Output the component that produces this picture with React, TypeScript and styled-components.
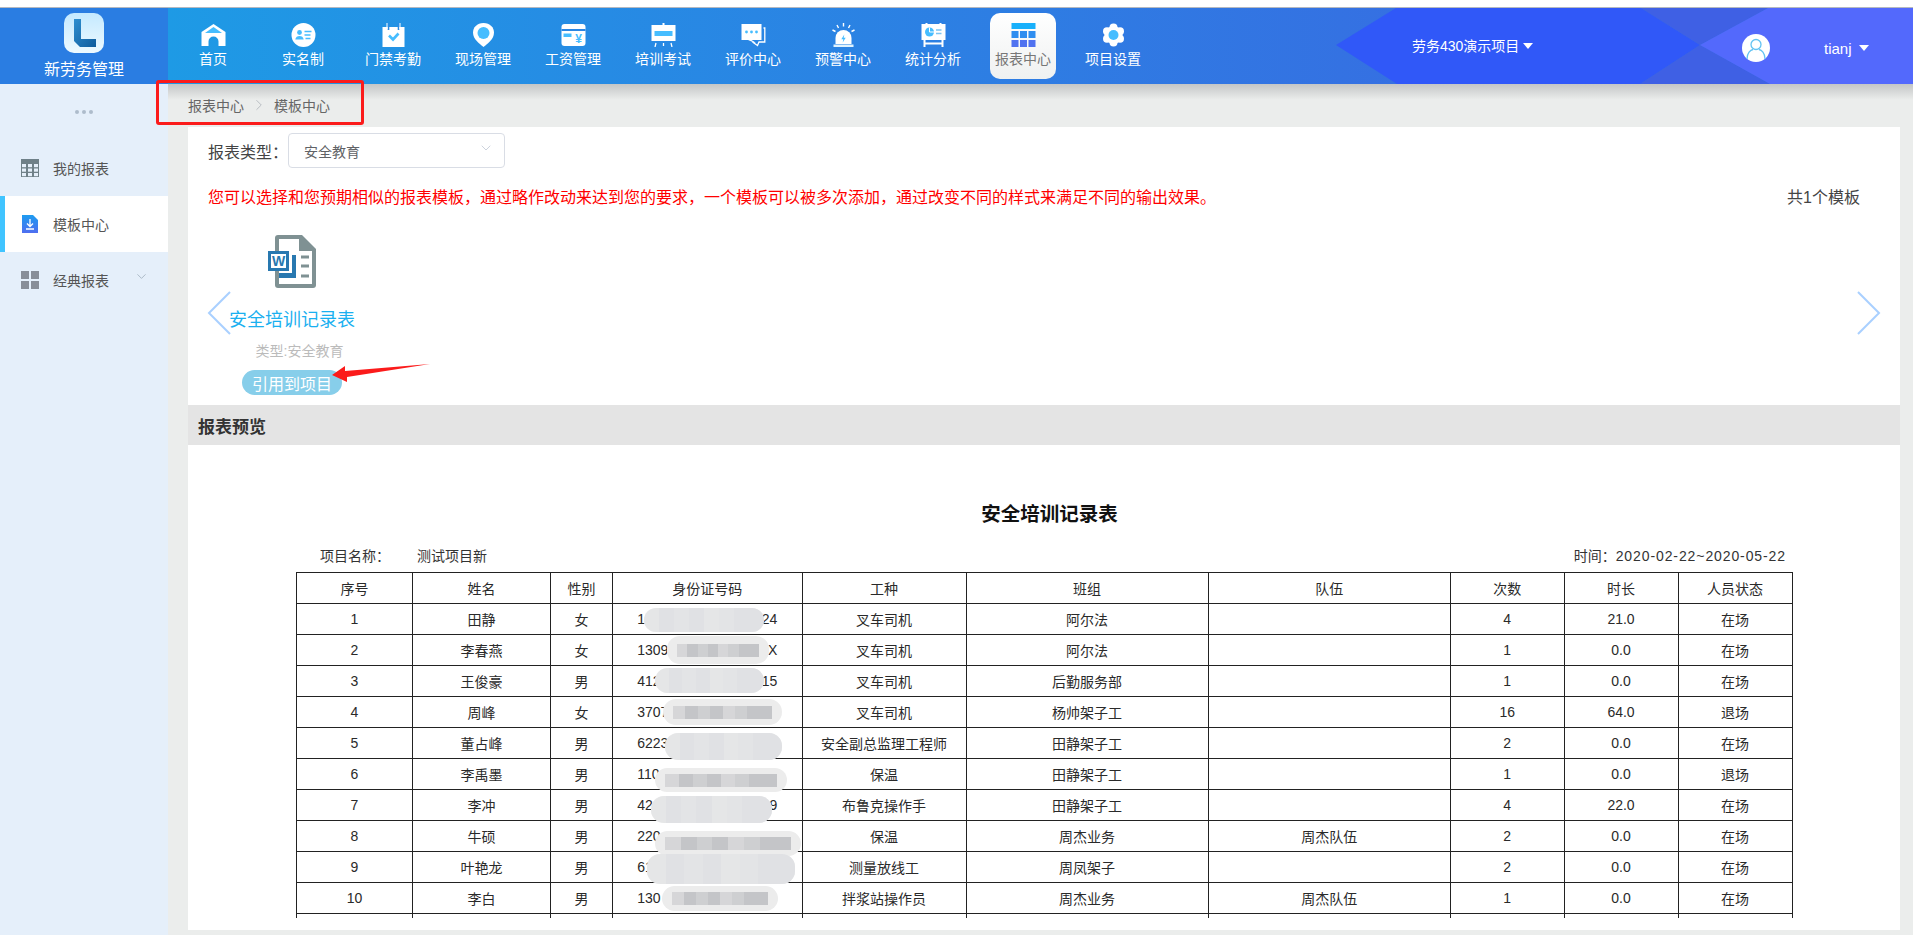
import React from "react";
import styled, { createGlobalStyle } from "styled-components";
import { ChevronDown, ChevronRight } from "lucide-react";

const fontStack = `"Liberation Sans", "Noto Sans CJK SC", sans-serif`;
const accent = "#46bdff";

const GlobalStyle = createGlobalStyle`
  html, body {
    margin: 0;
    height: 935px;
    overflow: hidden;
    background: #fff;
    font-family: ${fontStack};
  }
`;

const Page = styled.div`
  position: relative;
  height: 935px;
  padding-top: 8px;
  box-sizing: border-box;
  display: flex;
  flex-direction: column;
  overflow: hidden;
`;

const Header = styled.header`
  position: relative;
  flex: 0 0 76px;
  display: flex;
  background: linear-gradient(90deg, #1e9ae5 168px, #3570e2 1400px);
  box-shadow: 0 -1px 0 #b4b8c0;
  z-index: 2;
`;

const HeaderPattern = styled.svg`
  position: absolute;
  right: 0;
  top: 0;
  width: 577px;
  height: 76px;
`;

const Brand = styled.div`
  flex: 0 0 168px;
  background: #2a7de2;
  display: flex;
  flex-direction: column;
  align-items: center;
  padding-top: 5px;
  box-sizing: border-box;
  color: #fff;
  font-size: 16px;
  line-height: 22px;
  svg { display: block; margin-bottom: 6px; }
`;

const Nav = styled.nav`
  display: flex;
  padding-top: 5px;
`;

const NavItem = styled.a<{ $active?: boolean }>`
  width: 66px;
  height: 66px;
  margin: 0 12px;
  padding-top: 10px;
  box-sizing: border-box;
  border-radius: 10px;
  display: flex;
  flex-direction: column;
  align-items: center;
  gap: 2px;
  font-size: 14px;
  line-height: 20px;
  white-space: nowrap;
  color: ${(p) => (p.$active ? "#777" : "#fff")};
  background: ${(p) => (p.$active ? "linear-gradient(180deg, #fff, #eff1f1)" : "transparent")};
`;

const ProjectMenu = styled.div`
  position: absolute;
  left: 1412px;
  top: 28px;
  display: flex;
  align-items: center;
  gap: 4px;
  color: #fff;
  font-size: 14px;
  line-height: 20px;
`;

const UserMenu = styled.div`
  position: absolute;
  left: 1742px;
  top: 25px;
  display: flex;
  align-items: center;
  color: #fff;
  font-size: 15px;
  line-height: 28px;
`;

const UserName = styled.span`
  margin-left: 54px;
  margin-right: 7px;
  padding-top: 2px;
`;

const Caret = styled.i`
  display: inline-block;
  width: 0;
  height: 0;
  border-left: 5px solid transparent;
  border-right: 5px solid transparent;
  border-top: 6px solid #fff;
`;

const Body = styled.div`
  flex: 1;
  display: flex;
  min-height: 0;
  background: #ebedec;
`;

const Sidebar = styled.aside`
  flex: 0 0 168px;
  background: #e5effa;
`;

const SideDots = styled.div`
  height: 56px;
  display: flex;
  align-items: center;
  justify-content: center;
  gap: 3px;
  i {
    width: 4px;
    height: 4px;
    border-radius: 50%;
    background: #aebccb;
  }
`;

const SideItem = styled.a<{ $active?: boolean }>`
  height: 56px;
  display: flex;
  align-items: center;
  gap: 14px;
  box-sizing: border-box;
  padding: 0 19px 1px ${(p) => (p.$active ? "16px" : "21px")};
  font-size: 14px;
  color: #555;
  background: ${(p) => (p.$active ? "#fff" : "transparent")};
  border-left: ${(p) => (p.$active ? "5px solid #40c4ff" : "none")};
`;

const SideArrow = styled(ChevronDown)`
  margin-left: auto;
  margin-top: -6px;
  color: #8a9aa8;
`;

const Main = styled.main`
  flex: 1;
  min-width: 0;
  display: flex;
  flex-direction: column;
  padding: 0 13px 5px 20px;
`;

const Breadcrumb = styled.div`
  flex: 0 0 43px;
  display: flex;
  align-items: center;
  box-sizing: border-box;
  margin: 0 -13px 0 -20px;
  padding: 0 0 2px 20px;
  font-size: 14px;
  color: #666;
  background: linear-gradient(180deg, #c4c6c6, #ebedec 16px);
  svg { margin: 0 6px; color: #a8aeb4; }
`;

const Panel = styled.section`
  position: relative;
  flex: 1;
  min-height: 0;
  background: #fff;
  display: flex;
  flex-direction: column;
  overflow: hidden;
`;

const FilterRow = styled.div`
  display: flex;
  align-items: center;
  margin: 6px 0 0 20px;
  font-size: 16px;
  color: #444;
`;

const Select = styled.div`
  width: 217px;
  height: 35px;
  padding: 0 10px 0 15px;
  box-sizing: border-box;
  display: flex;
  align-items: center;
  justify-content: space-between;
  border: 1px solid #d9dde5;
  border-radius: 4px;
  font-size: 14px;
  color: #606266;
  svg { color: #b4bccc; margin-top: -6px; }
`;

const NoticeRow = styled.div`
  display: flex;
  justify-content: space-between;
  align-items: center;
  height: 22px;
  margin-top: 17px;
  margin-bottom: 1px;
  padding: 0 40px 0 20px;
  font-size: 16px;
  color: #f00;
`;

const Count = styled.span`
  color: #444;
  font-size: 16px;
`;

const Carousel = styled.div`
  position: relative;
  flex: 0 0 197px;
  padding: 27px 0 0 41px;
  box-sizing: border-box;
`;

const Template = styled.div`
  width: 126px;
  display: flex;
  flex-direction: column;
  align-items: center;
`;

const TemplateName = styled.div`
  margin-top: 18px;
  font-size: 18px;
  line-height: 28px;
  color: #1ab0f0;
  white-space: nowrap;
`;

const TemplateType = styled.div`
  margin: 7px 0 0 15px;
  font-size: 14px;
  line-height: 20px;
  color: #bbb;
  white-space: nowrap;
`;

const UseButton = styled.button`
  width: 100px;
  height: 25px;
  margin-top: 9px;
  padding: 0;
  border: 0;
  border-radius: 13px;
  background: #87ceea;
  color: #fff;
  font: 16px ${fontStack};
`;

const CarouselArrow = styled.svg<{ $side: "left" | "right" }>`
  position: absolute;
  top: 83px;
  ${(p) => (p.$side === "left" ? "left: 19px;" : "right: 19px;")}
`;

const SectionBar = styled.div`
  flex: 0 0 40px;
  display: flex;
  align-items: center;
  padding-left: 10px;
  background: #e4e4e4;
  font-size: 17px;
  font-weight: 700;
  color: #333;
`;

const Preview = styled.div`
  flex: 1;
  min-height: 0;
  padding: 55px 107px 0 108px;
`;

const PreviewTitle = styled.h2`
  margin: 0;
  padding-left: 10px;
  text-align: center;
  font-size: 19.5px;
  line-height: 28px;
  font-weight: 700;
  color: #111;
`;

const MetaRow = styled.div`
  display: flex;
  justify-content: space-between;
  height: 20px;
  margin: 18px 0 6px;
  padding: 0 7px 0 24px;
  font-size: 14px;
  line-height: 20px;
  color: #333;
`;

const MetaValue = styled.span`
  margin-left: 27px;
`;

const MetaDate = styled.span`
  letter-spacing: 0.9px;
`;

const TableClip = styled.div`
  height: 346px;
  overflow: hidden;
`;

const Table = styled.table`
  width: 1496px;
  table-layout: fixed;
  border-collapse: collapse;
  font-size: 14px;
  color: #2a2a2a;
  text-align: center;
`;

const Th = styled.th<{ $w: number }>`
  width: ${(p) => p.$w}px;
  height: 31px;
  padding: 0;
  box-sizing: border-box;
  border: 1px solid #222;
  font-weight: 400;
`;

const Td = styled.td`
  position: relative;
  height: 31px;
  padding: 0;
  box-sizing: border-box;
  border: 1px solid #222;
  white-space: nowrap;
`;

const IdText = styled.div`
  width: 140px;
  margin: 0 auto;
  display: flex;
  justify-content: space-between;
`;

// the blurred-out part of an id number, a smear with mosaic squares in it
const Patch = styled.div<{ $x: number; $y: number; $w: number; $h: number; $tone: string; $full: boolean }>`
  position: absolute;
  left: ${(p) => p.$x}px;
  top: ${(p) => p.$y}px;
  width: ${(p) => p.$w}px;
  height: ${(p) => p.$h}px;
  border-radius: 13px;
  background: #ececec;
  display: flex;
  align-items: center;
  overflow: hidden;
  padding: 0 ${(p) => (p.$full ? "0" : "10px")};
  box-sizing: border-box;
  div {
    flex: 1;
    height: ${(p) => (p.$full ? "100%" : "13px")};
    background: ${(p) => p.$tone};
  }
  div:nth-child(3n) { opacity: 0.75; }
  div:nth-child(4n + 1) { opacity: 0.55; }
`;

const RedFrame = styled.div`
  position: absolute;
  left: 156px;
  top: 80px;
  width: 208px;
  height: 45px;
  box-sizing: border-box;
  border: 3px solid #fb1b1b;
  border-radius: 3px;
  z-index: 3;
`;

const RedArrow = styled.svg`
  position: absolute;
  left: 330px;
  top: 362px;
  z-index: 3;
`;

const HomeIcon = () => (
  <svg width="25" height="24" viewBox="0 0 24 24">
    <path fill="#fff" d="M12 1 24 9V23H17V18.5a5 5 0 0 0-10 0V23H0V9Z" />
    <path fill={accent} d="M12 4 20.5 10H3.5Z" />
  </svg>
);

const IdCardIcon = () => (
  <svg width="25" height="24" viewBox="0 0 24 24">
    <circle cx="12" cy="12" r="12" fill="#fff" />
    <circle cx="8" cy="9.5" r="2.4" fill={accent} />
    <path fill={accent} d="M3.8 16.5c.4-2.6 2-3.6 4.2-3.6s3.800 1 4.200 3.600Z" />
    <path stroke={accent} strokeWidth="1.500" d="M13 8.500h7M13 12h6M14 15.500h5" />
  </svg>
);

const CalendarIcon = () => (
  <svg width="25" height="24" viewBox="0 0 24 24">
    <path fill="#fff" d="M1 4H23V24H1Z" />
    <path stroke="#2a8ae4" strokeWidth="1.600" d="M7 0V7M17 0V7" />
    <path stroke="#fff" strokeWidth="1" d="M5.500 0V6M18.500 0V6" />
    <path fill="none" stroke={accent} strokeWidth="2.600" d="M7.500 12.500 11.500 16.500 17 10.500" />
  </svg>
);

const PinIcon = () => (
  <svg width="25" height="24" viewBox="0 0 24 24">
    <path fill="#fff" d="M12 0C5.400 0 1.500 4.500 1.500 9.800 1.500 16 8 21 12 24c4-3 10.500-8 10.500-14.200C22.500 4.500 18.600 0 12 0Z" />
    <circle cx="12" cy="10" r="6" fill={accent} />
  </svg>
);

const WageIcon = () => (
  <svg width="25" height="24" viewBox="0 0 24 24">
    <rect y="1" width="24" height="22" rx="3" fill="#fff" />
    <rect y="6" width="24" height="2" fill="#2a86e3" />
    <rect x="2" y="10.500" width="8" height="3.500" fill={accent} />
    <text x="17" y="20" fontSize="12" fontWeight="700" textAnchor="middle" fill={accent}>¥</text>
  </svg>
);

const BoardIcon = () => (
  <svg width="25" height="24" viewBox="0 0 24 24">
    <rect x="11" y="0" width="2" height="3" fill="#fff" />
    <rect y="2" width="24" height="16" fill="#fff" />
    <rect x="3" y="8" width="18" height="5" fill={accent} />
    <path stroke="#fff" strokeWidth="1.300" d="M3.500 24 4.500 20M12 20V23M20.500 24 19.500 20" />
  </svg>
);

const CommentIcon = () => (
  <svg width="25" height="24" viewBox="0 0 24 24">
    <path fill="none" stroke="#fff" strokeWidth="1.300" d="M22 5H23.300V19H17.500L16 22.500 11 19" />
    <path fill="#fff" d="M0 1H20V17H10L14 19.500 13.500 20 6.500 17H0Z" />
    <circle cx="5" cy="9" r="1.400" fill={accent} />
    <circle cx="10" cy="9" r="1.400" fill={accent} />
    <circle cx="15" cy="9" r="1.400" fill={accent} />
  </svg>
);

const AlarmIcon = () => (
  <svg width="25" height="24" viewBox="0 0 24 24">
    <path stroke="#fff" strokeWidth="1.400" d="M12 0V3.500M5.500 2 7 5M18.500 2 17 5M1 7 4 8.500M23 7 20 8.500" />
    <path fill="#fff" d="M4 21V15a8 8 0 0 1 16 0V21Z" />
    <rect x="2" y="21.500" width="20" height="2.500" fill="#dff3ff" />
    <path fill={accent} d="M12.800 11.500 9.800 16.200H11.800L11.200 19.500 14.200 14.800H12.200Z" />
  </svg>
);

const StatsIcon = () => (
  <svg width="25" height="24" viewBox="0 0 24 24">
    <rect x="4" y="0" width="2" height="2" fill="#fff" />
    <rect x="18" y="0" width="2" height="2" fill="#fff" />
    <rect y="1" width="24" height="16" fill="#fff" />
    <circle cx="8" cy="9" r="4.500" fill={accent} />
    <path stroke="#fff" strokeWidth="1" d="M8 9V4.500M8 9H12.500" />
    <path stroke="#7cc4f4" strokeWidth="1.500" d="M14.500 7H20M14.500 10.500H20" />
    <path stroke="#fff" strokeWidth="2" d="M3 17V24M21 17V24M3 20.500H21" />
  </svg>
);

const ReportIcon = () => (
  <svg width="25" height="24" viewBox="0 0 24 24">
    <rect x="0" y="0" width="24" height="6" fill="#18b0fb" />
    <rect x="0" y="8" width="7" height="7" fill="#2f8ef0" />
    <rect x="8.500" y="8" width="7" height="7" fill="#2f8ef0" />
    <rect x="17" y="8" width="7" height="7" fill="#2f8ef0" />
    <rect x="0" y="17" width="7" height="7" fill="#5072f0" />
    <rect x="8.500" y="17" width="7" height="7" fill="#5072f0" />
    <rect x="17" y="17" width="7" height="7" fill="#5072f0" />
  </svg>
);

const GearIcon = () => (
  <svg width="25" height="24" viewBox="0 0 24 24">
    <g fill="#fff">
      <circle cx="12" cy="12" r="9" />
      <circle cx="12" cy="4.500" r="4" />
      <circle cx="12" cy="19.500" r="4" />
      <circle cx="5.500" cy="8.200" r="4" />
      <circle cx="18.500" cy="8.200" r="4" />
      <circle cx="5.500" cy="15.800" r="4" />
      <circle cx="18.500" cy="15.800" r="4" />
    </g>
    <circle cx="12" cy="12" r="5" fill={accent} />
  </svg>
);

const LogoIcon = () => (
  <svg width="40" height="40" viewBox="0 0 40 40">
    <defs>
      <linearGradient id="logoBg" x1="0" y1="0" x2="0" y2="1">
        <stop offset="0" stopColor="#c4e9ff" />
        <stop offset="1" stopColor="#eefaff" />
      </linearGradient>
      <linearGradient id="logoL" x1="0" y1="0" x2="1" y2="1">
        <stop offset="0" stopColor="#2f8fd0" />
        <stop offset="1" stopColor="#0f5c9c" />
      </linearGradient>
    </defs>
    <rect width="40" height="40" rx="10" fill="url(#logoBg)" />
    <path fill="url(#logoL)" d="M10 6H17V26H32V34H16L10 28Z" />
  </svg>
);

const WordIcon = () => (
  <svg width="48" height="53" viewBox="0 0 48 53">
    <path fill="#7f9193" d="M10 0H34L48 14V50a3 3 0 0 1-3 3H10a3 3 0 0 1-3-3V3a3 3 0 0 1 3-3Z" />
    <path fill="#fff" d="M11 4H31V16H44V49H11Z" />
    <rect y="16" width="21" height="20" fill="#2878b0" />
    <rect x="3" y="19" width="15" height="14" fill="#fff" />
    <text x="10.500" y="31" fontSize="14" fontWeight="700" textAnchor="middle" fill="#2878b0">W</text>
    <path fill="#2878b0" d="M24 20H28V43H11V38H24Z" />
    <path stroke="#7f9193" strokeWidth="3" d="M33 22H41M33 31H41M33 41H41" />
  </svg>
);

const AvatarIcon = () => (
  <svg width="28" height="28" viewBox="0 0 28 28">
    <circle cx="14" cy="14" r="14" fill="#fff" />
    <circle cx="14" cy="10.500" r="5" fill="none" stroke="#62c3f2" strokeWidth="1.300" />
    <path fill="none" stroke="#62c3f2" strokeWidth="1.300" d="M5 25c0-6 3.500-9 6-9.500M23 25c0-6-3.500-9-6-9.500" />
  </svg>
);

const TableIcon = () => (
  <svg width="18" height="18" viewBox="0 0 18 18">
    <rect width="18" height="18" fill="#6f8088" />
    <g fill="#e5effa">
      {[5, 9.500, 14].map((y) =>
        [1, 7, 13].map((x) => <rect key={`${x}-${y}`} x={x} y={y} width="4" height="3.200" />)
      )}
    </g>
  </svg>
);

const DownloadDocIcon = () => (
  <svg width="18" height="18" viewBox="0 0 18 18">
    <defs>
      <linearGradient id="docBlue" x1="0" y1="0" x2="0" y2="1">
        <stop offset="0" stopColor="#1d9cf0" />
        <stop offset="1" stopColor="#4f6ef0" />
      </linearGradient>
    </defs>
    <path fill="url(#docBlue)" d="M1 0H12L17 5V18H1Z" />
    <path stroke="#fff" strokeWidth="1.300" fill="none" d="M9 4V11M6 8.500 9 11.500 12 8.500M5 14H13" />
  </svg>
);

const GridIcon = () => (
  <svg width="18" height="18" viewBox="0 0 18 18">
    <g fill="#888e98">
      <rect width="8" height="8" />
      <rect x="10" width="8" height="8" />
      <rect y="10" width="8" height="8" />
      <rect x="10" y="10" width="8" height="8" />
    </g>
  </svg>
);

const navItems = [
  { label: "首页", icon: <HomeIcon /> },
  { label: "实名制", icon: <IdCardIcon /> },
  { label: "门禁考勤", icon: <CalendarIcon /> },
  { label: "现场管理", icon: <PinIcon /> },
  { label: "工资管理", icon: <WageIcon /> },
  { label: "培训考试", icon: <BoardIcon /> },
  { label: "评价中心", icon: <CommentIcon /> },
  { label: "预警中心", icon: <AlarmIcon /> },
  { label: "统计分析", icon: <StatsIcon /> },
  { label: "报表中心", icon: <ReportIcon />, active: true },
  { label: "项目设置", icon: <GearIcon /> },
];

const columns = [
  { title: "序号", w: 116 },
  { title: "姓名", w: 138 },
  { title: "性别", w: 62 },
  { title: "身份证号码", w: 189.5 },
  { title: "工种", w: 164 },
  { title: "班组", w: 242 },
  { title: "队伍", w: 242.5 },
  { title: "次数", w: 113.5 },
  { title: "时长", w: 114 },
  { title: "人员状态", w: 114 },
];

const dark = "#c4c5c8";
const pale = "#e0e1e4";

const rows = [
  { name: "田静", sex: "女", idHead: "1", idTail: "24", job: "叉车司机", group: "阿尔法", team: "", times: 4, hours: "21.0", state: "在场", patch: [31, 4, 120, 24, pale] },
  { name: "李春燕", sex: "女", idHead: "1309", idTail: "X", job: "叉车司机", group: "阿尔法", team: "", times: 1, hours: "0.0", state: "在场", patch: [54, 1, 102, 28, dark] },
  { name: "王俊豪", sex: "男", idHead: "412", idTail: "15", job: "叉车司机", group: "后勤服务部", team: "", times: 1, hours: "0.0", state: "在场", patch: [42, 2, 109, 25, pale] },
  { name: "周峰", sex: "女", idHead: "3707", idTail: "", job: "叉车司机", group: "杨帅架子工", team: "", times: 16, hours: "64.0", state: "退场", patch: [50, 2, 119, 26, dark] },
  { name: "董占峰", sex: "男", idHead: "6223", idTail: "", job: "安全副总监理工程师", group: "田静架子工", team: "", times: 2, hours: "0.0", state: "在场", patch: [52, 5, 117, 27, pale] },
  { name: "李禹墨", sex: "男", idHead: "110", idTail: "", job: "保温", group: "田静架子工", team: "", times: 1, hours: "0.0", state: "退场", patch: [42, 9, 132, 24, dark] },
  { name: "李冲", sex: "男", idHead: "42", idTail: "9", job: "布鲁克操作手", group: "田静架子工", team: "", times: 4, hours: "22.0", state: "在场", patch: [38, 6, 121, 27, pale] },
  { name: "牛硕", sex: "男", idHead: "220", idTail: "", job: "保温", group: "周杰业务", team: "周杰队伍", times: 2, hours: "0.0", state: "在场", patch: [42, 10, 146, 25, dark] },
  { name: "叶艳龙", sex: "男", idHead: "61", idTail: "", job: "测量放线工", group: "周凤架子", team: "", times: 2, hours: "0.0", state: "在场", patch: [34, 2, 148, 30, pale] },
  { name: "李白", sex: "男", idHead: "130", idTail: "3", job: "拌浆站操作员", group: "周杰业务", team: "周杰队伍", times: 1, hours: "0.0", state: "在场", patch: [49, 3, 116, 25, dark] },
] as const;

const App = () => {
  return (
    <Page>
      <GlobalStyle />

      <Header>
        <HeaderPattern viewBox="1336 0 577 76">
          <polygon fill="#3058f8" points="1336,37 1396,0 1641,0 1700,37 1640,76 1397,76" />
          <polygon fill="#3f60e4" points="1641,0 1768,0 1700,37" />
          <polygon fill="#3f60e4" points="1640,76 1770,76 1700,37" />
          <polygon fill="#5369fc" points="1700,37 1768,0 1913,0 1913,76 1770,76" />
        </HeaderPattern>

        <Brand>
          <LogoIcon />
          新劳务管理
        </Brand>

        <Nav>
          {navItems.map((item) => (
            <NavItem key={item.label} $active={item.active}>
              {item.icon}
              {item.label}
            </NavItem>
          ))}
        </Nav>

        <ProjectMenu>
          劳务430演示项目
          <Caret />
        </ProjectMenu>

        <UserMenu>
          <AvatarIcon />
          <UserName>tianj</UserName>
          <Caret />
        </UserMenu>
      </Header>

      <Body>
        <Sidebar>
          <SideDots>
            <i />
            <i />
            <i />
          </SideDots>
          <SideItem>
            <TableIcon />
            我的报表
          </SideItem>
          <SideItem $active>
            <DownloadDocIcon />
            模板中心
          </SideItem>
          <SideItem>
            <GridIcon />
            经典报表
            <SideArrow size={15} strokeWidth={1} />
          </SideItem>
        </Sidebar>

        <Main>
          <Breadcrumb>
            报表中心
            <ChevronRight size={18} strokeWidth={1} />
            模板中心
          </Breadcrumb>

          <Panel>
            <FilterRow>
              报表类型：
              <Select>
                安全教育
                <ChevronDown size={16} strokeWidth={1} />
              </Select>
            </FilterRow>

            <NoticeRow>
              您可以选择和您预期相似的报表模板，通过略作改动来达到您的要求，一个模板可以被多次添加，通过改变不同的样式来满足不同的输出效果。
              <Count>共1个模板</Count>
            </NoticeRow>

            <Carousel>
              <Template>
                <WordIcon />
                <TemplateName>安全培训记录表</TemplateName>
                <TemplateType>类型:安全教育</TemplateType>
                <UseButton>引用到项目</UseButton>
              </Template>
              <CarouselArrow $side="left" width="24" height="44" viewBox="0 0 24 44">
                <polyline points="23,1 2,22 23,43" fill="none" stroke="#a9d0ff" strokeWidth="2" />
              </CarouselArrow>
              <CarouselArrow $side="right" width="24" height="44" viewBox="0 0 24 44">
                <polyline points="1,1 22,22 1,43" fill="none" stroke="#a9d0ff" strokeWidth="2" />
              </CarouselArrow>
            </Carousel>

            <SectionBar>报表预览</SectionBar>

            <Preview>
              <PreviewTitle>安全培训记录表</PreviewTitle>
              <MetaRow>
                <span>
                  项目名称：
                  <MetaValue>测试项目新</MetaValue>
                </span>
                <span>
                  时间：
                  <MetaDate>2020-02-22~2020-05-22</MetaDate>
                </span>
              </MetaRow>
              <TableClip>
                <Table>
                  <thead>
                    <tr>
                      {columns.map((col) => (
                        <Th key={col.title} $w={col.w}>
                          {col.title}
                        </Th>
                      ))}
                    </tr>
                  </thead>
                  <tbody>
                    {rows.map((row, index) => (
                      <tr key={row.name}>
                        <Td>{index + 1}</Td>
                        <Td>{row.name}</Td>
                        <Td>{row.sex}</Td>
                        <Td>
                          <IdText>
                            <span>{row.idHead}</span>
                            <span>{row.idTail}</span>
                          </IdText>
                          <Patch
                            $x={row.patch[0]}
                            $y={row.patch[1]}
                            $w={row.patch[2]}
                            $h={row.patch[3]}
                            $tone={row.patch[4]}
                            $full={row.patch[4] === pale}
                          >
                            {Array.from({ length: 8 }, (_, i) => (
                              <div key={i} />
                            ))}
                          </Patch>
                        </Td>
                        <Td>{row.job}</Td>
                        <Td>{row.group}</Td>
                        <Td>{row.team}</Td>
                        <Td>{row.times}</Td>
                        <Td>{row.hours}</Td>
                        <Td>{row.state}</Td>
                      </tr>
                    ))}
                    <tr>
                      {columns.map((col) => (
                        <Td key={col.title} />
                      ))}
                    </tr>
                  </tbody>
                </Table>
              </TableClip>
            </Preview>
          </Panel>
        </Main>
      </Body>

      <RedFrame />
      <RedArrow width="102" height="22" viewBox="0 0 102 22">
        <polygon fill="#fb1b1b" points="2,13 15,4 15,9 100,2 17,15 17,20" />
      </RedArrow>
    </Page>
  );
};

export default App;
